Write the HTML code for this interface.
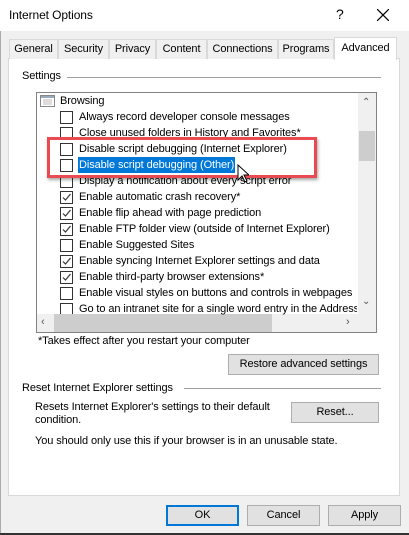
<!DOCTYPE html>
<html><head><style>
*{margin:0;padding:0;box-sizing:border-box}
body{width:409px;height:535px;overflow:hidden;background:#f0f0f0;font-family:"Liberation Sans",sans-serif;font-size:11px;letter-spacing:-0.1px;color:#000;position:relative}
.a{position:absolute;white-space:nowrap}
.tab{position:absolute;top:39px;height:20px;background:#f0f0f0;border:1px solid #d9d9d9;border-bottom:none;text-align:center;line-height:18px}
.cb{position:absolute;left:60px;width:13px;height:13px;border:1px solid #333;background:#fff}
.btn{position:absolute;background:#e1e1e1;border:1px solid #adadad;text-align:center;line-height:19px}
.row{position:absolute;left:79px;white-space:nowrap;line-height:16px}
</style></head><body>
<div class="a" style="left:0;top:0;width:409px;height:31px;background:#fff"></div>
<div class="a" style="left:9px;top:8px;font-size:12px">Internet Options</div>
<div class="a" style="left:336px;top:6px;font-size:14px">?</div>
<svg class="a" style="left:377px;top:9px" width="12" height="12"><path d="M0 0L12 12M12 0L0 12" stroke="#000" stroke-width="1.2"/></svg>
<div class="a" style="left:0;top:31px;width:1px;height:504px;background:#aaa"></div>
<div class="a" style="left:0;top:533px;width:409px;height:2px;background:#333"></div>
<div class="a" style="left:8px;top:58px;width:392px;height:438px;background:#fff;border:1px solid #d9d9d9"></div>
<div class="tab" style="left:9px;width:49px">General</div>
<div class="tab" style="left:58px;width:51px">Security</div>
<div class="tab" style="left:109px;width:47px">Privacy</div>
<div class="tab" style="left:156px;width:51px">Content</div>
<div class="tab" style="left:207px;width:71px">Connections</div>
<div class="tab" style="left:278px;width:56px">Programs</div>
<div class="tab" style="left:334px;top:37px;height:23px;width:63px;background:#fff;line-height:20px">Advanced</div>
<div class="a" style="left:22px;top:70px">Settings</div>
<div class="a" style="left:67px;top:77px;width:314px;height:1px;background:#a0a0a0"></div>
<div class="a" style="left:36px;top:92px;width:341px;height:241px;border:1px solid #828282;background:#fff"></div>
<div class="a" style="left:358px;top:93px;width:18px;height:221px;background:#f0f0f0"></div>
<div class="a" style="left:359px;top:131px;width:16px;height:30px;background:#cdcdcd"></div>
<div class="a" style="left:362px;top:97px;font-size:10px;color:#555">&#8963;</div>
<div class="a" style="left:362px;top:296px;font-size:10px;color:#555">&#8964;</div>
<div class="a" style="left:37px;top:314px;width:339px;height:18px;background:#f0f0f0"></div>
<div class="a" style="left:54px;top:314px;width:218px;height:18px;background:#cdcdcd"></div>
<div class="a" style="left:41px;top:316px;font-size:11px;color:#555">&lsaquo;</div>
<div class="a" style="left:346px;top:316px;font-size:11px;color:#555">&rsaquo;</div>
<svg class="a" style="left:40px;top:95px" width="15" height="12"><rect x=".5" y=".5" width="14" height="11" fill="#fff" stroke="#888"/><rect x="1" y="1" width="13" height="2" fill="#9ab"/><path d="M3 5h9M3 7h9M3 9h9" stroke="#bbb"/></svg>
<div class="a" style="left:60px;top:93px;line-height:16px">Browsing</div>
<div class="row" style="top:109px">Always record developer console messages</div>
<div class="row" style="top:125px">Close unused folders in History and Favorites*</div>
<div class="row" style="top:141px">Disable script debugging (Internet Explorer)</div>
<div class="row" style="top:157px;background:#0078d7;color:#fff;padding:0 1px;left:78px">Disable script debugging (Other)</div>
<div class="row" style="top:173px">Display a notification about every script error</div>
<div class="row" style="top:189px">Enable automatic crash recovery*</div>
<div class="row" style="top:205px">Enable flip ahead with page prediction</div>
<div class="row" style="top:221px">Enable FTP folder view (outside of Internet Explorer)</div>
<div class="row" style="top:237px">Enable Suggested Sites</div>
<div class="row" style="top:253px">Enable syncing Internet Explorer settings and data</div>
<div class="row" style="top:269px">Enable third-party browser extensions*</div>
<div class="row" style="top:285px">Enable visual styles on buttons and controls in webpages</div>
<div class="row" style="top:301px;width:278px;overflow:hidden">Go to an intranet site for a single word entry in the Address bar</div>
<div class="cb" style="top:111px"></div><div class="cb" style="top:127px"></div><div class="cb" style="top:143px"></div><div class="cb" style="top:159px"></div><div class="cb" style="top:175px"></div>
<div class="cb" style="top:191px"></div><div class="cb" style="top:207px"></div><div class="cb" style="top:223px"></div><div class="cb" style="top:239px"></div><div class="cb" style="top:255px"></div><div class="cb" style="top:271px"></div><div class="cb" style="top:287px"></div><div class="cb" style="top:303px;height:11px;border-bottom:none"></div>
<svg class="a" style="left:60px;top:191px" width="13" height="110"><g fill="none" stroke="#333" stroke-width="1.2"><path d="M3 6.5l2.5 2.5 5-6"/><path d="M3 22.5l2.5 2.5 5-6"/><path d="M3 38.5l2.5 2.5 5-6"/><path d="M3 70.5l2.5 2.5 5-6"/><path d="M3 86.5l2.5 2.5 5-6"/></g></svg>
<div class="a" style="left:47px;top:137px;width:270px;height:41px;border:3px solid #ea4b52;box-shadow:1px 2px 3px rgba(0,0,0,.35)"></div>
<svg class="a" style="left:237px;top:164px" width="12" height="20"><path d="M1 1v15l4-4 3 6 2-1-3-6h5z" fill="#fff" stroke="#000"/></svg>
<div class="a" style="left:38px;top:335px">*Takes effect after you restart your computer</div>
<div class="btn" style="left:228px;top:354px;width:151px;height:21px">Restore advanced settings</div>
<div class="a" style="left:22px;top:382px">Reset Internet Explorer settings</div>
<div class="a" style="left:184px;top:388px;width:197px;height:1px;background:#a0a0a0"></div>
<div class="a" style="left:35px;top:401px;line-height:13px">Resets Internet Explorer's settings to their default<br>condition.</div>
<div class="btn" style="left:291px;top:402px;width:88px;height:21px">Reset...</div>
<div class="a" style="left:35px;top:435px">You should only use this if your browser is in an unusable state.</div>
<div class="btn" style="left:166px;top:505px;width:73px;height:21px;border:2px solid #0078d7;line-height:17px">OK</div>
<div class="btn" style="left:247px;top:505px;width:73px;height:21px">Cancel</div>
<div class="btn" style="left:328px;top:505px;width:73px;height:21px">Apply</div>
</body></html>
